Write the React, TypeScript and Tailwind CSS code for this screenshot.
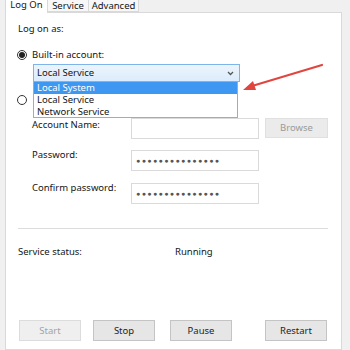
import React from "react";

const font = { fontFamily: '"Noto Sans", "Open Sans", sans-serif' };

function Radio({ checked }: { checked?: boolean }) {
  return (
    <span className="flex h-[10px] w-[10px] shrink-0 items-center justify-center rounded-full border border-[#333333] bg-white">
      {checked ? <span className="h-[6px] w-[6px] rounded-full bg-[#222222]" /> : null}
    </span>
  );
}

function Field({ value }: { value?: string }) {
  return (
    <div className="flex h-[21px] w-[128px] shrink-0 items-center border border-[#dadada] bg-white pl-[4px] text-[7px] tracking-[1.4px] text-[#555555]">
      {value}
    </div>
  );
}

function Button({ label, disabled, className = "" }: { label: string; disabled?: boolean; className?: string }) {
  return (
    <button
      type="button"
      className={`flex h-[21px] w-[62px] shrink-0 items-center justify-center border text-[9.5px] ${
        disabled ? "border-[#dcdcdc] bg-[#efefef] text-[#a3a3a3]" : "border-[#c4c4c4] bg-[#e6e6e6] text-[#1e1e1e]"
      } ${className}`}
    >
      {label}
    </button>
  );
}

export default function App() {
  const dots = "●●●●●●●●●●●●●●●";

  return (
    <div className="relative flex h-[350px] w-[350px] flex-col overflow-hidden bg-[#f0f0f0] text-[9.5px] text-[#141414]" style={font}>
      {/* tabs */}
      <div className="relative z-10 flex h-[12px] pl-[5px]">
        <div className="flex h-[13px] w-[43px] items-center justify-center border-x border-[#d9d9d9] bg-white pb-[3px] leading-none">
          Log On
        </div>
        <div className="flex h-[12px] w-[41px] items-center justify-center border-r border-b border-[#d9d9d9] bg-[#f7f7f7] leading-none">
          Service
        </div>
        <div className="flex h-[12px] w-[50px] items-center justify-center border-r border-b border-[#d9d9d9] bg-[#f7f7f7] leading-none">
          Advanced
        </div>
      </div>

      {/* panel */}
      <div className="ml-[5px] flex w-[337px] flex-1 flex-col border border-[#d9d9d9] bg-white px-[12px] pt-[10px] leading-[12px]">
        <div>Log on as:</div>

        <div className="mt-[14px] flex h-[12px] items-center">
          <span className="-ml-px">
            <Radio checked />
          </span>
          <span className="ml-[5px]">Built-in account:</span>
        </div>

        <div className="relative z-10 ml-[15px] mt-[3px] w-[207px]">
          <div className="flex h-[18px] items-center justify-between border border-[#7eb4ea] bg-gradient-to-b from-[#ecf4fc] to-[#dcecfc] pl-[3px] pr-[5px]">
            <span>Local Service</span>
            <svg width="7" height="5" viewBox="0 0 7 5" fill="none">
              <path d="M1 1l2.5 2.5L6 1" stroke="#555" strokeWidth="1.3" />
            </svg>
          </div>
          <div className="absolute left-0 top-full w-[205px] border border-t-0 border-[#7eb4ea] bg-white">
            <div className="h-[12px] bg-[#3e97f0] pl-[3px] text-white">Local System</div>
            <div className="h-[12px] pl-[3px]">Local Service</div>
            <div className="h-[11px] pl-[3px]">Network Service</div>
          </div>
        </div>

        {/* "This account" radio, its label sits under the open list */}
        <div className="mt-[12px] flex h-[12px] items-center">
          <span className="-ml-px">
            <Radio />
          </span>
        </div>

        <div className="mt-[12px] flex items-start">
          <div className="w-[113px] pl-[14px] pt-[1px]">Account Name:</div>
          <Field />
          <button
            type="button"
            className="ml-[6px] flex h-[20px] w-[63px] items-center justify-center border border-[#e0e0e0] bg-[#ebebeb] text-[#9a9a9a]"
          >
            Browse
          </button>
        </div>

        <div className="mt-[11px] flex items-start">
          <div className="-mt-[1px] w-[113px] pl-[14px]">Password:</div>
          <Field value={dots} />
        </div>

        <div className="mt-[12px] flex items-start">
          <div className="-mt-[1px] w-[113px] pl-[14px]">Confirm password:</div>
          <Field value={dots} />
        </div>

        <div className="mt-[24px] w-[310px] border-t border-[#dcdcdc]" />

        <div className="mt-[17px] flex">
          <div className="w-[157px]">Service status:</div>
          <div>Running</div>
        </div>

        <div className="mt-[62px] flex">
          <Button label="Start" disabled className="ml-px" />
          <Button label="Stop" className="ml-[12px]" />
          <Button label="Pause" className="ml-[15px]" />
          <Button label="Restart" className="ml-[33px]" />
        </div>
      </div>

      {/* callout arrow */}
      <svg className="pointer-events-none absolute left-0 top-0 z-20" width="350" height="350">
        <line x1="322" y1="65" x2="252" y2="86" stroke="#e0463f" strokeWidth="2.2" strokeLinecap="round" />
        <polygon points="243,90 253,81 256,90" fill="#e0463f" />
      </svg>
    </div>
  );
}
